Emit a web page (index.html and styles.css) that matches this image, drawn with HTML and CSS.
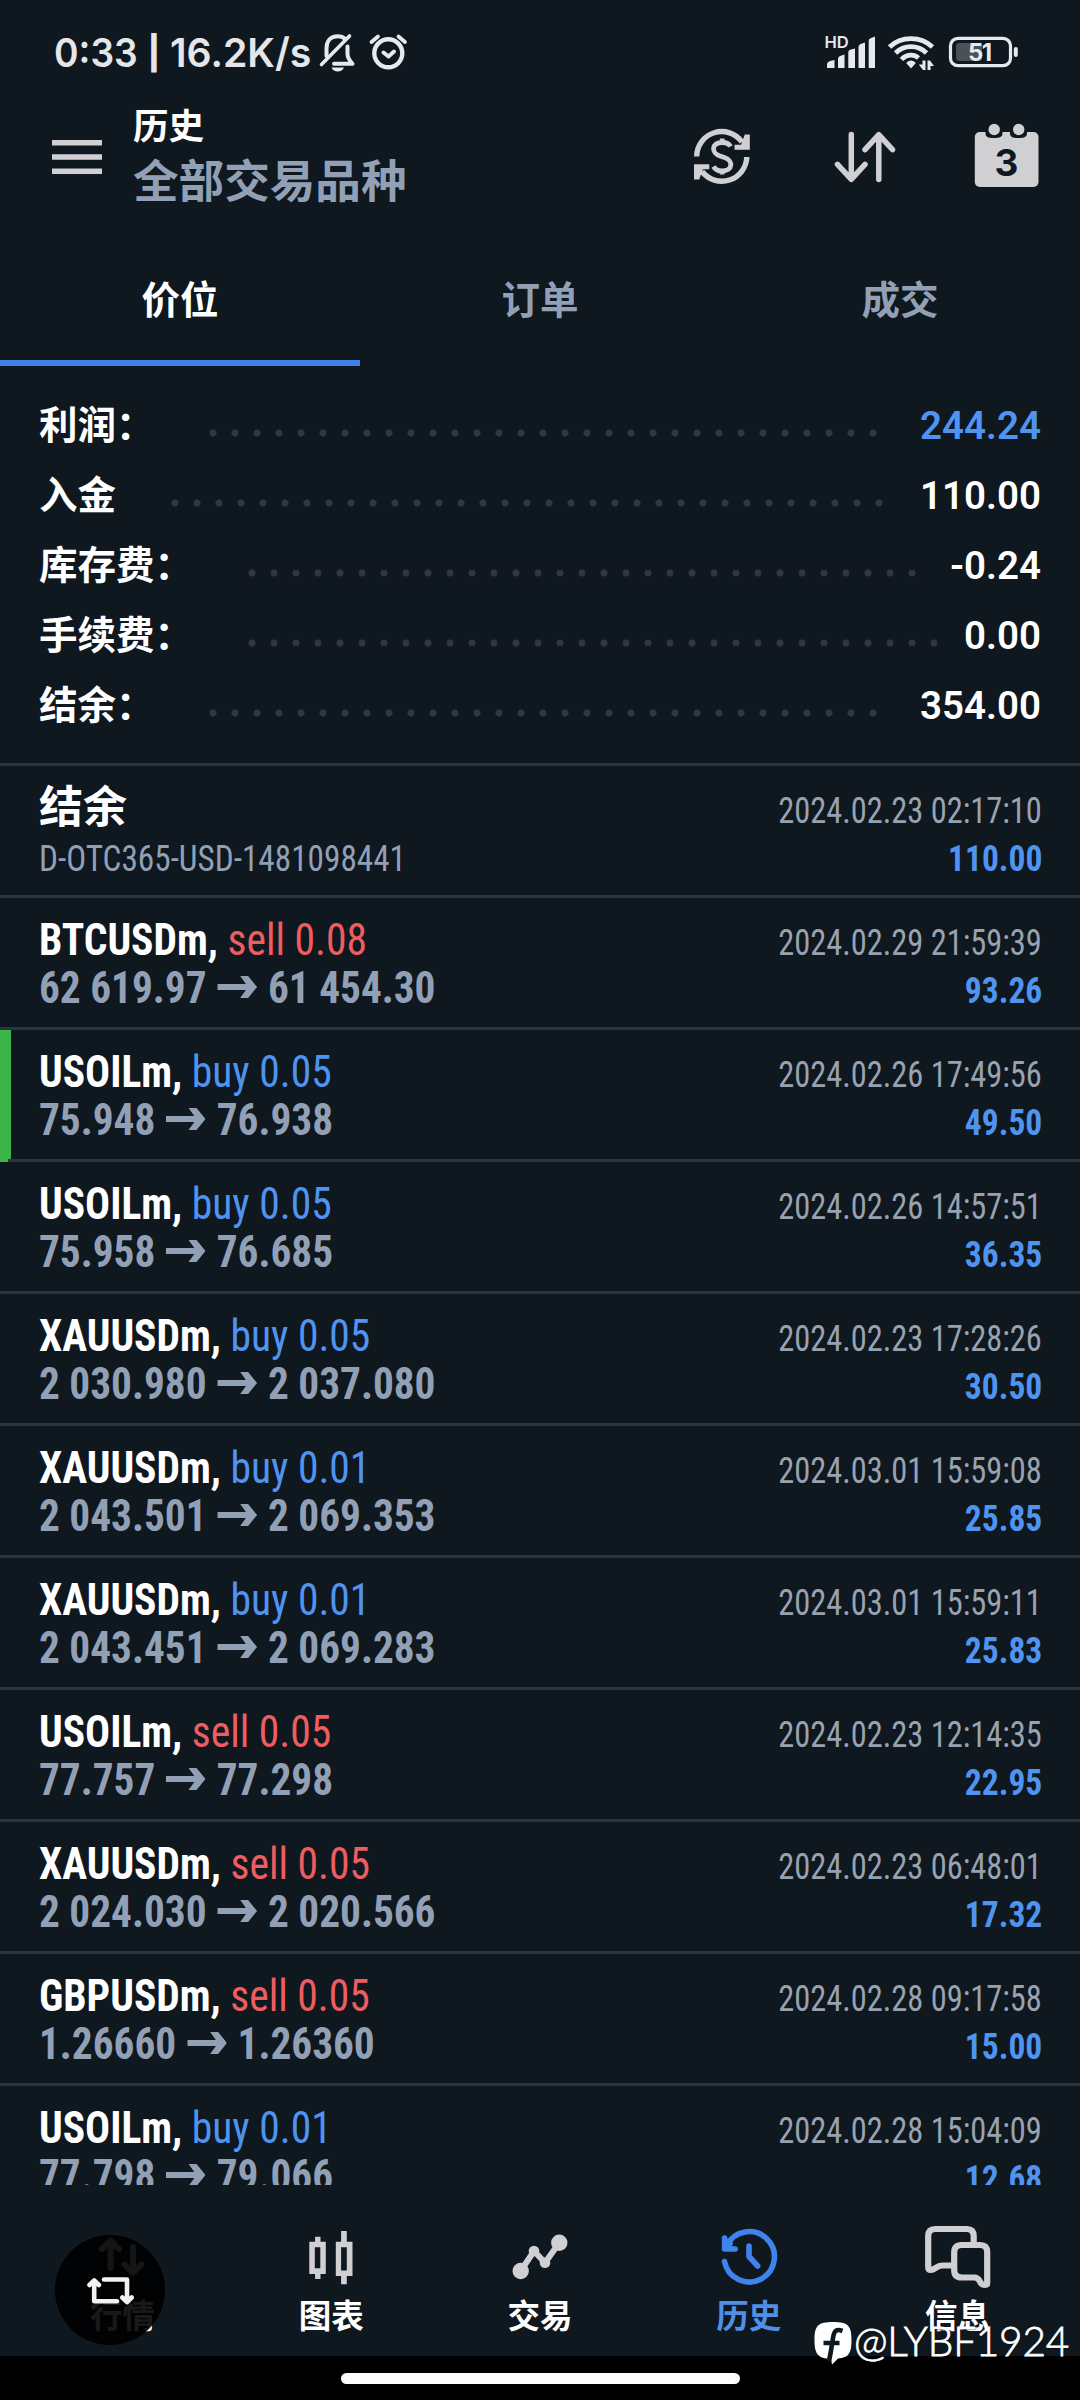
FILE: index.html
```html
<!DOCTYPE html>
<html lang="zh-CN">
<head>
<meta charset="utf-8">
<title>历史</title>
<link rel="stylesheet" href="styles.css">
</head>
<body>
<svg class="defs" aria-hidden="true">
  <symbol id="arrow" viewBox="0 0 40 22" preserveAspectRatio="none"><path d="M0 8H31V14H0zM23 0H31L40 11L31 22H23L31 11z"/></symbol>
</svg>
<div class="screen">
  <div class="statusbar">
    <div class="clock"><span class="time">0:33</span><span class="bar">|</span><span class="rate">16.2K/s</span></div>
    <svg class="status-left" viewBox="318 30 92 45">
      <g fill="none" stroke="#e6e9ed" stroke-linecap="round" stroke-linejoin="round">
        <path stroke-width="4" d="M326.500 56V48.500C326.500 41 330.500 36.300 337.500 36.300C341 36.300 343.500 37.300 345.500 39.200"/>
        <path stroke-width="4" d="M347.500 46.500V54C347.500 58 349.500 60.500 352.500 63.800H334"/>
        <path stroke-width="3.600" d="M321.500 64.500L349.500 36"/>
        <circle cx="388.300" cy="53.300" r="14" stroke-width="4.400"/>
        <path stroke-width="3.800" d="M371.500 42L378 36.500M405 42L398.500 36.500"/>
        <path stroke-width="4" d="M383.500 52.500L388.500 56.500L394 51.500"/>
      </g>
      <path fill="#e6e9ed" d="M331.500 67.500H344C343 70 340.500 71.500 337.700 71.500S332.500 70 331.500 67.500z"/>
    </svg>
    <svg class="status-right" viewBox="820 30 202 45">
      <text x="824.500" y="48" class="hd">HD</text>
      <g fill="#e6e9ed">
        <path d="M827 68V65Q827 62 830 61L834.500 60V68zM838 68V59Q838 57 840 56L844.500 54.500V68zM848.300 68V52.500Q848.300 50.500 850 49.800L855 48.500V68zM858.500 68V47Q858.500 45 860.500 44L865 42.500V68zM868.700 68V41Q868.700 39 870.500 38.200L875 36.500V68z"/>
        <path d="M911 60.500a5.500 5.500 0 0 1 4.800 2.500L911 68.500L906.200 63A5.500 5.500 0 0 1 911 60.500z"/>
        <path d="M922.500 60.500H925.500V70H923L918.800 64.500H922.500zM927.500 70V60.500H930L934 66H930.500V70z"/>
      </g>
      <g fill="none" stroke="#e6e9ed" stroke-width="4.800">
        <path d="M889.500 47C901 35.800 921 35.800 932.500 47"/>
        <path d="M895.500 53C904 44.600 918 44.600 926.500 53"/>
        <path d="M901.500 59.500C906.500 54 914 54 918.500 58"/>
      </g>
      <rect x="956" y="43" width="26" height="18" rx="3" fill="#4b5157"/>
      <rect x="950.500" y="38.300" width="60" height="27.400" rx="7.500" fill="none" stroke="#e6e9ed" stroke-width="3.200"/>
      <rect x="1013.800" y="47" width="4" height="10" rx="2" fill="#e6e9ed"/>
      <text x="968" y="61" class="battery">51</text>
    </svg>
  </div>

  <header class="appbar">
    <svg class="menu" viewBox="0 0 50 34"><path fill="#d0d0d3" d="M0 0H50V5.600H0zM0 14.200H50V19.800H0zM0 28.400H50V34H0z"/></svg>
    <div class="titles">
      <div class="title">历史</div>
      <div class="subtitle">全部交易品种</div>
    </div>
    <svg class="actions" viewBox="690 120 352 70">
      <g fill="none" stroke="#d0d0d3">
        <path stroke-width="5.400" d="M696.700 156.500A25 25 0 0 1 742 142"/>
        <path stroke-width="5.400" d="M746.800 157A25 25 0 0 1 702 171.500"/>
        <path stroke-width="4.800" d="M730.500 146.500Q728.500 142.500 722.500 142.500C710.500 142.500 711.500 153.500 720 156L724.500 157.500C733.500 160.500 733 171 722 171Q716 171 713.500 166.500M722.200 138.500V142.500M722.200 170V174.500"/>
      </g>
      <path fill="#d0d0d3" d="M749.800 134.500V149.800H734.500V144.700H741L744.800 134.500zM694 179.500V164.200H709.300V169.300H703L699.200 179.500z"/>
      <path fill="none" stroke="#d0d0d3" stroke-width="5.500" stroke-linecap="round" stroke-linejoin="round" d="M851.300 134.500V179M837.500 164.300L851.300 179.300L865 164.300M878.800 179.500V135M865 149.700L878.800 134.700L892.500 149.700"/>
      <rect x="974.800" y="132" width="63.700" height="55" rx="5" fill="#d0d0d3"/>
      <path fill="#0f171f" d="M985.500 131H1002.500V133C1002.500 137 1000 138 994 138S985.500 137 985.500 133zM1010 131H1027V133C1027 137 1024.500 138 1018.500 138S1010 137 1010 133z"/>
      <circle cx="994.200" cy="129.500" r="5.700" fill="#d0d0d3"/>
      <circle cx="1018.700" cy="129.500" r="5.700" fill="#d0d0d3"/>
      <text x="1006.500" y="175.500" text-anchor="middle" class="day">3</text>
    </svg>
  </header>

  <nav class="tabs">
    <div class="tab tab-on">价位</div>
    <div class="tab">订单</div>
    <div class="tab">成交</div>
  </nav>

  <section class="summary">
    <div class="sum"><span>利润：</span><i class="dots" style="--dots:31"></i><b class="blue">244.24</b></div>
    <div class="sum"><span>入金</span><i class="dots" style="--dots:33"></i><b>110.00</b></div>
    <div class="sum"><span>库存费：</span><i class="dots" style="--dots:31"></i><b>-0.24</b></div>
    <div class="sum"><span>手续费：</span><i class="dots" style="--dots:32"></i><b>0.00</b></div>
    <div class="sum"><span>结余：</span><i class="dots" style="--dots:31"></i><b>354.00</b></div>
  </section>

  <main class="list">
    <div class="row balance"><div class="line"><span class="cn">结余</span><span class="date">2024.02.23 02:17:10</span></div><div class="line"><span class="ref">D-OTC365-USD-1481098441</span><span class="amt">110.00</span></div></div>
    <div class="row"><div class="line"><span class="sym"><b>BTCUSDm,</b> <span class="sell">sell 0.08</span></span><span class="date">2024.02.29 21:59:39</span></div><div class="line"><span class="price">62 619.97<svg class="arr"><use href="#arrow"/></svg>61 454.30</span><span class="amt">93.26</span></div></div>
    <div class="row marked"><div class="line"><span class="sym"><b>USOILm,</b> <span class="buy">buy 0.05</span></span><span class="date">2024.02.26 17:49:56</span></div><div class="line"><span class="price">75.948<svg class="arr"><use href="#arrow"/></svg>76.938</span><span class="amt">49.50</span></div></div>
    <div class="row"><div class="line"><span class="sym"><b>USOILm,</b> <span class="buy">buy 0.05</span></span><span class="date">2024.02.26 14:57:51</span></div><div class="line"><span class="price">75.958<svg class="arr"><use href="#arrow"/></svg>76.685</span><span class="amt">36.35</span></div></div>
    <div class="row"><div class="line"><span class="sym"><b>XAUUSDm,</b> <span class="buy">buy 0.05</span></span><span class="date">2024.02.23 17:28:26</span></div><div class="line"><span class="price">2 030.980<svg class="arr"><use href="#arrow"/></svg>2 037.080</span><span class="amt">30.50</span></div></div>
    <div class="row"><div class="line"><span class="sym"><b>XAUUSDm,</b> <span class="buy">buy 0.01</span></span><span class="date">2024.03.01 15:59:08</span></div><div class="line"><span class="price">2 043.501<svg class="arr"><use href="#arrow"/></svg>2 069.353</span><span class="amt">25.85</span></div></div>
    <div class="row"><div class="line"><span class="sym"><b>XAUUSDm,</b> <span class="buy">buy 0.01</span></span><span class="date">2024.03.01 15:59:11</span></div><div class="line"><span class="price">2 043.451<svg class="arr"><use href="#arrow"/></svg>2 069.283</span><span class="amt">25.83</span></div></div>
    <div class="row"><div class="line"><span class="sym"><b>USOILm,</b> <span class="sell">sell 0.05</span></span><span class="date">2024.02.23 12:14:35</span></div><div class="line"><span class="price">77.757<svg class="arr"><use href="#arrow"/></svg>77.298</span><span class="amt">22.95</span></div></div>
    <div class="row"><div class="line"><span class="sym"><b>XAUUSDm,</b> <span class="sell">sell 0.05</span></span><span class="date">2024.02.23 06:48:01</span></div><div class="line"><span class="price">2 024.030<svg class="arr"><use href="#arrow"/></svg>2 020.566</span><span class="amt">17.32</span></div></div>
    <div class="row"><div class="line"><span class="sym"><b>GBPUSDm,</b> <span class="sell">sell 0.05</span></span><span class="date">2024.02.28 09:17:58</span></div><div class="line"><span class="price">1.26660<svg class="arr"><use href="#arrow"/></svg>1.26360</span><span class="amt">15.00</span></div></div>
    <div class="row"><div class="line"><span class="sym"><b>USOILm,</b> <span class="buy">buy 0.01</span></span><span class="date">2024.02.28 15:04:09</span></div><div class="line"><span class="price">77.798<svg class="arr"><use href="#arrow"/></svg>79.066</span><span class="amt">12.68</span></div></div>
  </main>

  <nav class="bottom">
    <div class="item">
      <svg viewBox="90 2225 64 64"><path fill="none" stroke="#d0d0d3" stroke-width="6" stroke-linecap="round" stroke-linejoin="round" d="M110.500 2268V2241M102 2249L110.500 2240.500L119 2249M133 2247V2272M124.500 2264.500L133 2273L141.500 2264.500"/></svg>
      <span>行情</span>
    </div>
    <div class="item">
      <svg viewBox="299.200 2225 64 64"><path fill="#d0d0d3" fill-rule="evenodd" d="M315.300 2236.700H320.700V2241.700H326V2274H320.700V2279H315.300V2274H309.500V2241.700H315.300zM315 2247.200V2268.300H320.500V2247.200zM341.300 2231H347V2241.700H352.700V2276H347V2284.200H341.300V2276H336V2241.700H341.300zM341.300 2247.200V2270.500H347V2247.200z"/></svg>
      <span>图表</span>
    </div>
    <div class="item">
      <svg viewBox="508 2225 64 64"><path fill="none" stroke="#d0d0d3" stroke-width="6" d="M520.700 2271L534 2251L545 2262.700L559.300 2242.700"/><g fill="#d0d0d3"><circle cx="520.700" cy="2271" r="8.200"/><circle cx="534" cy="2251" r="5.300"/><circle cx="545" cy="2262.700" r="5.300"/><circle cx="559.300" cy="2242.700" r="8.200"/></g></svg>
      <span>交易</span>
    </div>
    <div class="item item-on">
      <svg viewBox="716.800 2225 64 64"><path fill="none" stroke="#3f83ee" stroke-width="5.600" stroke-linecap="round" stroke-linejoin="round" d="M724.300 2261.500A25.200 25.200 0 1 0 726.500 2245.500M724.400 2238V2249H735M748.800 2246V2256.500L757.500 2266"/><path fill="#3f83ee" d="M724 2237L735 2249H724zM726 2244L731 2239L733 2244L729 2249z"/></svg>
      <span>历史</span>
    </div>
    <div class="item">
      <svg viewBox="924.800 2225 68 68" class="chat"><path fill="none" stroke="#d0d0d3" stroke-width="6.200" stroke-linejoin="round" d="M952.500 2265.500H943C937 2265.500 936 2270 931.500 2270Q929 2270 929 2267V2236Q929 2229 936 2229H967.500Q974.500 2229 974.500 2236V2244M962.500 2245H981Q988 2245 988 2252V2283Q988 2285 985.500 2285C979 2285 982.500 2277.500 975 2277.500H962.500Q955 2277.500 955 2270V2252.500Q955 2245 962.500 2245z"/></svg>
      <span>信息</span>
    </div>
  </nav>
  <div class="gesture"><div class="pill"></div></div>

  <div class="float">
    <svg viewBox="82 2262 56 56"><path fill="none" stroke="#f2f2f2" stroke-width="4.600" stroke-linejoin="round" stroke-linecap="round" d="M104 2279.500H127V2300M94.200 2282V2301.300H117M89.500 2285L94.200 2280.500L98.900 2285M122.300 2297.500L127 2302L131.700 2297.500"/></svg>
  </div>
  <div class="mark">
    <svg viewBox="812 2320 42 48"><path fill="#fff" d="M833 2322C848 2322 851.500 2325.500 851.500 2340C851.500 2353 849 2357.500 838 2358.500L832 2364.500L831 2359C818 2358.500 814.500 2354 814.500 2340C814.500 2325.500 818 2322 833 2322z"/><path fill="none" stroke="#0f171f" stroke-width="4.600" d="M842.500 2331C836 2328.500 834 2331 833 2338L830.500 2353.500L829 2361M823.500 2343H839.500"/></svg>
    <span>@LYBF1924</span>
  </div>
</div>
</body>
</html>
```
FILE: styles.css
```css
* { box-sizing: border-box; }
body {
  margin: 0;
  background: #0f171f;
  color: #fff;
  font-family: Roboto, "Noto Sans CJK SC", sans-serif;
}
.defs { position: absolute; width: 0; height: 0; }
.screen {
  position: relative;
  width: 1080px;
  height: 2400px;
  overflow: hidden;
  display: flex;
  flex-direction: column;
}
.statusbar {
  height: 105px;
  padding: 0 58px 0 54px;
  display: flex;
  align-items: center;
}
.clock {
  width: 264px;
  display: flex;
  align-items: center;
  font: 600 40px/48px Inter, sans-serif;
  color: #e4e6ea;
  white-space: nowrap;
}
.time { width: 84px; transform: scaleX(.93); transform-origin: left; }
.bar { width: 32px; font-size: 33px; font-weight: 800; text-align: center; }
.rate { transform: scaleX(.98); transform-origin: left; }
.status-left { width: 92px; height: 45px; }
.status-right { width: 202px; height: 45px; margin-left: auto; }
.hd { font: 600 16.5px Inter, sans-serif; fill: #e6e9ed; }
.battery { font: 700 24px Inter, sans-serif; fill: #e6e9ed; letter-spacing: -1.5px; }
.appbar {
  height: 135px;
  padding: 0 38px 0 52px;
  display: flex;
}
.menu { width: 50px; height: 34px; margin-top: 35px; }
.titles { margin-left: 31px; }
.title { font-weight: 700; font-size: 35.5px; line-height: 44px; }
.subtitle { font-weight: 700; font-size: 45.600px; line-height: 56px; margin-top: 6px; color: #92a0b6; }
.actions { width: 352px; height: 70px; margin: 15px 0 0 auto; }
.day { font: 700 37px Inter, sans-serif; fill: #0f171f; }
.tabs {
  height: 126px;
  display: flex;
}
.tab {
  flex: 1;
  text-align: center;
  font-weight: 700;
  font-size: 38.500px;
  line-height: 122px;
  color: #92a0b6;
}
.tab-on { color: #fff; border-bottom: 6px solid #3f81e6; }
.summary {
  height: 397px;
  padding: 25px 39px 0;
}
.sum {
  height: 70px;
  display: flex;
  align-items: center;
  font-weight: 700;
  font-size: 38.500px;
  line-height: 70px;
}
.sum b { margin-left: auto; font-weight: 600; }
.dots {
  width: calc(var(--dots) * 22px);
  height: 8px;
  margin: 13px 0 0 47.500px;
  background: radial-gradient(circle at 11px 4px, #2f3741 3px, transparent 4px) 0 0 / 22px 8px;
}
.blue { color: #4f94f0; }
.list {
  height: 1422px;
  overflow: hidden;
  border-top: 3px solid #2c343e;
}
.row {
  height: 132px;
  padding: 18px 38px 0 39px;
  border-bottom: 3px solid #2c343e;
  font-family: "Roboto Condensed", "Noto Sans CJK SC", sans-serif;
}
.marked {
  background: linear-gradient(#3bb54a, #3bb54a) 0 0 / 11px 132px no-repeat border-box;
  border-image: linear-gradient(90deg, #3bb54a 11px, #2c343e 11px) 3;
}
.line {
  height: 48px;
  line-height: 48px;
  display: flex;
  justify-content: space-between;
  align-items: baseline;
  white-space: nowrap;
}
.balance .line + .line { line-height: 54px; }
.cn { font-weight: 700; font-size: 44px; }
.sym { font-size: 44px; transform: scaleX(.944); transform-origin: left; }
.sell { color: #ee5d60; }
.buy { color: #4f94f0; }
.price { font-weight: 700; font-size: 44px; color: #92a0b6; transform: scaleX(.938); transform-origin: left; }
.arr { width: 42.500px; height: 22px; margin: 0 11.5px 5px; vertical-align: baseline; fill: #92a0b6; }
.ref { font-size: 36px; color: #92a0b6; transform: scaleX(.923); transform-origin: left; }
.date { font-size: 36px; color: #98a2b0; transform: scaleX(.9); transform-origin: right; }
.amt { font-weight: 700; font-size: 36px; color: #4f94f0; transform: scaleX(.93); transform-origin: right; }
.bottom {
  height: 171px;
  padding: 40px 18px 0;
  display: flex;
}
.item {
  flex: 1;
  display: flex;
  flex-direction: column;
  align-items: center;
  font-weight: 700;
  font-size: 32.500px;
}
.item svg { width: 64px; height: 64px; }
.item .chat { width: 68px; height: 68px; margin-bottom: -4px; }
.item span { line-height: 50px; margin-top: 3px; }
.item-on { color: #4f8fe8; }
.gesture {
  height: 44px;
  background: #000;
  display: flex;
  justify-content: center;
  padding-top: 17px;
}
.pill { width: 399px; height: 11px; border-radius: 6px; background: #fff; }
.float {
  position: absolute;
  left: 55px;
  top: 2235px;
  width: 110px;
  height: 110px;
  border-radius: 50%;
  background: rgba(0, 0, 0, .9);
  display: flex;
  align-items: center;
  justify-content: center;
}
.float svg { width: 56px; height: 56px; }
.mark {
  position: absolute;
  left: 812px;
  top: 2314px;
  display: flex;
  align-items: center;
}
.mark svg { width: 42px; height: 48px; margin-top: 6px; }
.mark span { font: 300 40.500px/50px Lato, sans-serif; letter-spacing: -.2px; text-shadow: 1px 1px 1px rgba(0, 0, 0, .5); -webkit-text-stroke: .8px #fff; }
```
